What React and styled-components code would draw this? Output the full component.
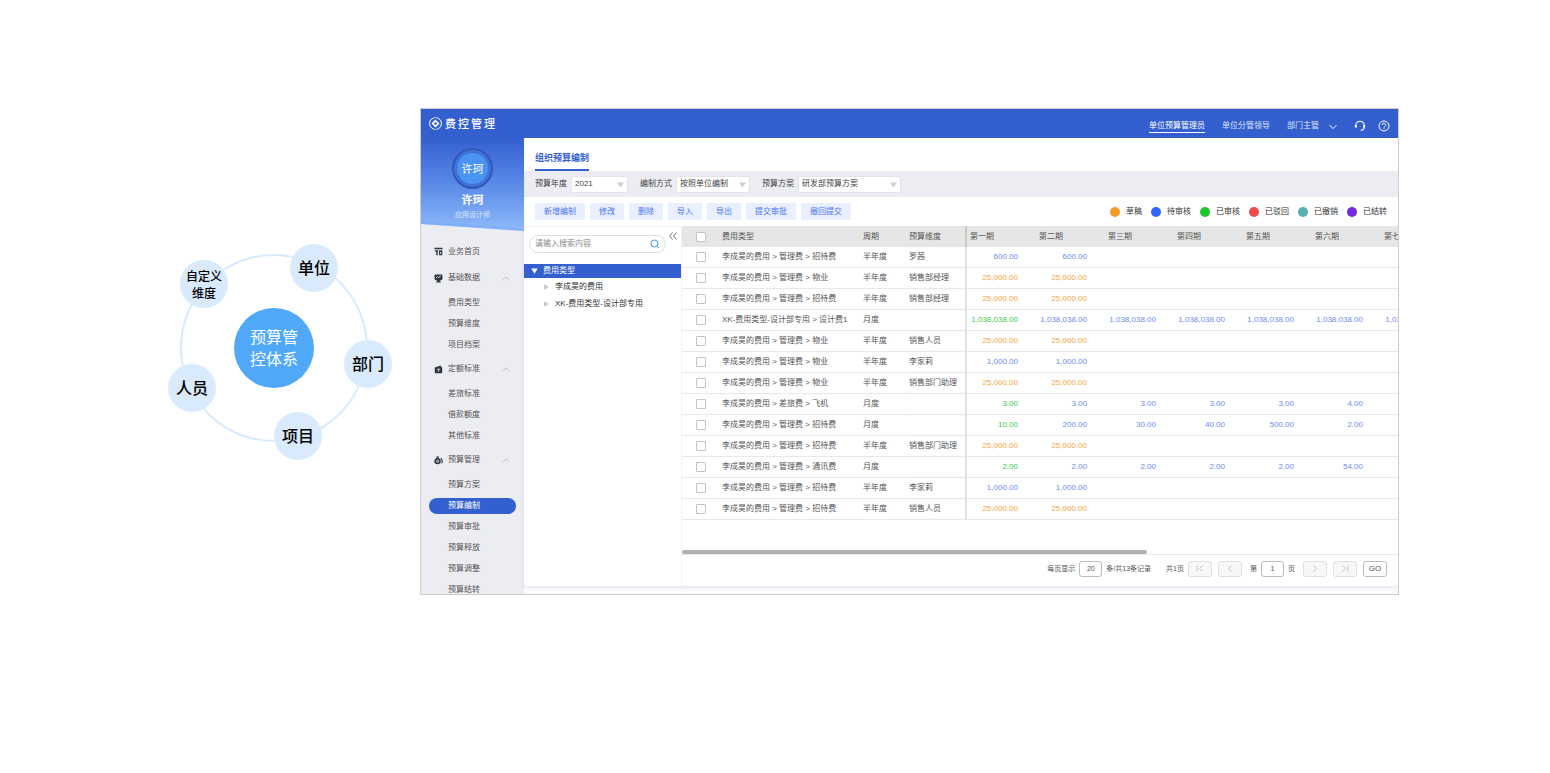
import React from 'react';
import styled, { createGlobalStyle } from 'styled-components';

const legend = [
  { label: '草稿', color: '#f79a2c' },
  { label: '待审核', color: '#3366ff' },
  { label: '已审核', color: '#1fc42f' },
  { label: '已驳回', color: '#f04a4a' },
  { label: '已撤销', color: '#58b0b3' },
  { label: '已结转', color: '#7228dc' },
];

const actions = ['新增编制', '修改', '删除', '导入', '导出', '提交审批', '撤回提交'];

const menu = [
  { title: '基础数据', icon: 'data', items: ['费用类型', '预算维度', '项目档案'] },
  { title: '定额标准', icon: 'quota', items: ['差旅标准', '借款额度', '其他标准'] },
  {
    title: '预算管理',
    icon: 'budget',
    items: ['预算方案', '预算编制', '预算审批', '预算释放', '预算调整', '预算结转'],
  },
];

const periods = ['第一期', '第二期', '第三期', '第四期', '第五期', '第六期', '第七期'];

const draft = '#f7a540';
const pending = '#6b8df8';
const approved = '#3ecb4c';

const entertain = '李成昊的费用 > 管理费 > 招待费';
const property = '李成昊的费用 > 管理费 > 物业';

const rows = [
  { type: entertain, cycle: '半年度', dim: '罗茜', first: pending, rest: pending, values: ['600.00', '600.00'] },
  { type: property, cycle: '半年度', dim: '销售部经理', first: draft, rest: draft, values: ['25,000.00', '25,000.00'] },
  { type: entertain, cycle: '半年度', dim: '销售部经理', first: draft, rest: draft, values: ['25,000.00', '25,000.00'] },
  {
    type: 'XK-费用类型-设计部专用 > 设计费1',
    cycle: '月度',
    dim: '',
    first: approved,
    rest: pending,
    values: Array(7).fill('1,038,038.00'),
  },
  { type: property, cycle: '半年度', dim: '销售人员', first: draft, rest: draft, values: ['25,000.00', '25,000.00'] },
  { type: property, cycle: '半年度', dim: '李家莉', first: pending, rest: pending, values: ['1,000.00', '1,000.00'] },
  { type: property, cycle: '半年度', dim: '销售部门助理', first: draft, rest: draft, values: ['25,000.00', '25,000.00'] },
  {
    type: '李成昊的费用 > 差旅费 > 飞机',
    cycle: '月度',
    dim: '',
    first: approved,
    rest: pending,
    values: ['3.00', '3.00', '3.00', '3.00', '3.00', '4.00'],
  },
  {
    type: entertain,
    cycle: '月度',
    dim: '',
    first: approved,
    rest: pending,
    values: ['10.00', '200.00', '30.00', '40.00', '500.00', '2.00'],
  },
  { type: entertain, cycle: '半年度', dim: '销售部门助理', first: draft, rest: draft, values: ['25,000.00', '25,000.00'] },
  {
    type: '李成昊的费用 > 管理费 > 通讯费',
    cycle: '月度',
    dim: '',
    first: approved,
    rest: pending,
    values: ['2.00', '2.00', '2.00', '2.00', '2.00', '54.00'],
  },
  { type: entertain, cycle: '半年度', dim: '李家莉', first: pending, rest: pending, values: ['1,000.00', '1,000.00'] },
  { type: entertain, cycle: '半年度', dim: '销售人员', first: draft, rest: draft, values: ['25,000.00', '25,000.00'] },
];

export default function App() {
  return (
    <>
      <GlobalStyle />
      <Page>
        <Diagram />
        <Window>
          <TopBar />
          <Body>
            <Sidebar />
            <Main>
              <Panel>
                <Tabs>
                  <Tab>组织预算编制</Tab>
                </Tabs>
                <Filters>
                  <Filter id='year' label='预算年度' value='2021' width='57px' />
                  <Filter id='mode' label='编制方式' value='按照单位编制' width='74px' />
                  <Filter id='plan' label='预算方案' value='研发部预算方案' width='103px' />
                </Filters>
                <Toolbar>
                  <Actions>
                    {actions.map((a) => (
                      <Action key={a} type='button'>
                        {a}
                      </Action>
                    ))}
                  </Actions>
                  <Legend>
                    {legend.map((l) => (
                      <LegendItem key={l.label}>
                        <Dot $color={l.color} />
                        {l.label}
                      </LegendItem>
                    ))}
                  </Legend>
                </Toolbar>
                <Content>
                  <Tree />
                  <Grid>
                    <BudgetTable />
                    <ScrollTrack>
                      <ScrollThumb />
                    </ScrollTrack>
                    <Pagination />
                  </Grid>
                </Content>
              </Panel>
            </Main>
          </Body>
        </Window>
      </Page>
    </>
  );
}

function Diagram() {
  return (
    <Orbit>
      <Ring />
      <Core>
        预算管
        <br />
        控体系
      </Core>
      <Node $x={122} $y={0}>
        单位
      </Node>
      <Node $x={176} $y={96}>
        部门
      </Node>
      <Node $x={106} $y={168}>
        项目
      </Node>
      <Node $x={0} $y={120}>
        人员
      </Node>
      <Node $x={12} $y={16} $small>
        自定义
        <br />
        维度
      </Node>
    </Orbit>
  );
}

function TopBar() {
  return (
    <Header>
      <Brand>
        <svg width='13' height='13' viewBox='0 0 13 13' fill='none' stroke='#fff'>
          <path d='M4 1.1A5.9 5.9 0 0 0 4 11.9M9 1.1A5.9 5.9 0 0 1 9 11.9' />
          <path d='M4 1.1A5.9 5.9 0 0 1 9 1.1M4 11.9A5.9 5.9 0 0 0 9 11.9' opacity='0.7' />
          <path d='M6.5 3.7 9.3 6.5 6.5 9.3 3.7 6.5Z' strokeWidth='1.6' />
        </svg>
        费控管理
      </Brand>
      <Roles>
        <Role href='#admin' $active>
          单位预算管理员
        </Role>
        <Role href='#leader'>单位分管领导</Role>
        <Role href='#manager'>部门主管</Role>
        <IconButton type='button' aria-label='更多'>
          <svg width='8' height='8' viewBox='0 0 8 8' fill='none' stroke='#fff'>
            <path d='M.6 2.2 4 5.6 7.4 2.2' />
          </svg>
        </IconButton>
      </Roles>
      <Tools>
        <IconButton type='button' aria-label='客服'>
          <svg width='12' height='12' viewBox='0 0 12 12' fill='none' stroke='#fff' strokeWidth='1.1'>
            <path d='M1.8 6.6V5.4a4.2 4.2 0 0 1 8.4 0v1.4c0 2-1.2 3.4-3.4 3.6' />
            <path d='M1.9 5.2v2.4M10.1 5.2v2.4' strokeWidth='2' />
          </svg>
        </IconButton>
        <IconButton type='button' aria-label='帮助'>
          <svg width='12' height='12' viewBox='0 0 12 12' fill='none' stroke='#fff'>
            <circle cx='6' cy='6' r='5' />
            <path d='M4.3 5a1.7 1.7 0 1 1 2.5 1.4C6.2 6.8 6 7 6 7.6M6 8.4v1' />
          </svg>
        </IconButton>
      </Tools>
    </Header>
  );
}

function MenuIcon({ name }) {
  return (
    <svg width='9' height='9' viewBox='0 0 9 9' fill='#33363d'>
      {name === 'home' && (
        <path d='M.5.8h8v1.5h-8zM.8 3.3h3.400v1.200H.8zM2.200 4.500h1.500v3.700H2.200zM5 3.300h3.300v4.900H5zM6.200 4.700v2.200h.9V4.700z' fillRule='evenodd' />
      )}
      {name === 'data' && (
        <>
          <path d='M1.8.4h5.4c.8 0 1.300.5 1.300 1.300v2.900c0 .8-.4 1.200-1.100 1.500L5.800 6.800v.7h1v.9H2.200v-.9h1v-.7L1.600 6.100C.9 5.800.5 5.400.5 4.600V1.700C.5.900 1 .4 1.800.4z' />
          <path d='M2.200 3.900l1.300-1.300 1.200 1 2-1.700' fill='none' stroke='#ecedf2' strokeWidth='.9' />
        </>
      )}
      {name === 'quota' && (
        <>
          <path d='M.8 2.600 6.800.6l.5 1.600h.9v5.300c0 .5-.3.8-.8.8H1.600c-.5 0-.8-.3-.8-.8z' />
          <path d='M3.300 4.200h2.600M4.600 4.200v2.400' stroke='#ecedf2' strokeWidth='.9' />
        </>
      )}
      {name === 'budget' && (
        <>
          <path d='M2.200.6h2.800l-.6 1.500c1.500.6 2.400 1.900 2.400 3.500 0 1.800-1 2.700-3.200 2.700S.3 7.400.3 5.600c0-1.600.9-2.900 2.500-3.500z' />
          <path d='M6.100 2.400l1-.3c1.100.9 1.700 2 1.700 3.300 0 1.300-.4 2-1.400 2.400.7-2 .3-3.900-1.300-5.400z' />
          <circle cx='3.600' cy='5.300' r='1.100' fill='none' stroke='#ecedf2' strokeWidth='.9' />
        </>
      )}
    </svg>
  );
}

function Sidebar() {
  return (
    <Aside>
      <Profile>
        <Avatar>
          <AvatarInner>许珂</AvatarInner>
        </Avatar>
        <Name>许珂</Name>
        <Job>应用设计师</Job>
      </Profile>
      <Nav>
        <HomeLink href='#home'>
          <MenuIcon name='home' />
          业务首页
        </HomeLink>
        {menu.map((group) => (
          <section key={group.title}>
            <GroupTitle type='button'>
              <MenuIcon name={group.icon} />
              {group.title}
              <svg width='8' height='5' viewBox='0 0 8 5' fill='none' stroke='#b4b6bb' strokeWidth='.8'>
                <path d='M.8 4 4 1l3.200 3' />
              </svg>
            </GroupTitle>
            {group.items.map((item) => (
              <MenuRow key={item}>
                <MenuLink href='#menu' $active={item === '预算编制'}>
                  {item}
                </MenuLink>
              </MenuRow>
            ))}
          </section>
        ))}
      </Nav>
    </Aside>
  );
}

function Filter({ id, label, value, width }) {
  return (
    <Field>
      <label htmlFor={id}>{label}</label>
      <SelectBox $width={width}>
        <Select id={id} defaultValue={value}>
          <option>{value}</option>
        </Select>
        <Caret width='7' height='6' viewBox='0 0 7 6' fill='#cfcfcf'>
          <path d='M0 .5h7L3.500 5.500z' />
        </Caret>
      </SelectBox>
    </Field>
  );
}

function Tree() {
  return (
    <TreePane>
      <SearchRow>
        <SearchBox>
          <SearchInput type='text' aria-label='搜索' placeholder='请输入搜索内容' />
          <svg width='10' height='10' viewBox='0 0 10 10' fill='none' stroke='#3f97f0'>
            <circle cx='4.500' cy='4.500' r='3.500' />
            <path d='M7 7.200 8.800 9' />
          </svg>
        </SearchBox>
        <Collapse type='button' aria-label='收起'>
          <svg width='8' height='8' viewBox='0 0 8 8' fill='none' stroke='#666' strokeWidth='.9'>
            <path d='M3.600 .5.7 4l2.900 3.500M7.400 .5 4.500 4l2.900 3.500' />
          </svg>
        </Collapse>
      </SearchRow>
      <TreeRoot>
        <svg width='7' height='6' viewBox='0 0 7 6' fill='#fff'>
          <path d='M.3.500h6.400L3.500 5.800z' />
        </svg>
        费用类型
      </TreeRoot>
      {['李成昊的费用', 'XK-费用类型-设计部专用'].map((t) => (
        <TreeLeaf key={t}>
          <svg width='5' height='6' viewBox='0 0 5 6' fill='#c9c9c9'>
            <path d='M0 .3v5.400L5 3z' />
          </svg>
          {t}
        </TreeLeaf>
      ))}
    </TreePane>
  );
}

function BudgetTable() {
  return (
    <TableScroll>
      <Table>
        <colgroup>
          <Col $width={36} />
          <Col $width={141} />
          <Col $width={46} />
          <Col $width={62} />
          {periods.map((p) => (
            <Col key={p} $width={69} />
          ))}
        </colgroup>
        <thead>
          <tr>
            <Th>
              <Check type='checkbox' aria-label='全选' />
            </Th>
            <Th>费用类型</Th>
            <Th>周期</Th>
            <Th $edge>预算维度</Th>
            {periods.map((p) => (
              <Th key={p}>{p}</Th>
            ))}
          </tr>
        </thead>
        <tbody>
          {rows.map((row, i) => (
            <tr key={i}>
              <Td>
                <Check type='checkbox' aria-label={row.type} />
              </Td>
              <Td>{row.type}</Td>
              <Td>{row.cycle}</Td>
              <Td $edge>{row.dim}</Td>
              {periods.map((p, n) => (
                <Amount key={p} $color={n === 0 ? row.first : row.rest}>
                  {row.values[n]}
                </Amount>
              ))}
            </tr>
          ))}
        </tbody>
      </Table>
    </TableScroll>
  );
}

function Pagination() {
  return (
    <Pager>
      <Group>
        <label htmlFor='size'>每页显示</label>
        <PageInput id='size' defaultValue='20' />
        条/共13条记录
      </Group>
      <Group $spaced>
        共1页
        <PageButton type='button' disabled aria-label='首页'>
          <svg width='8' height='7' viewBox='0 0 8 7'>
            <path d='M1 .5v6M6.500 .5l-3 3 3 3' />
          </svg>
        </PageButton>
      </Group>
      <PageButton type='button' disabled aria-label='上一页'>
        <svg width='8' height='7' viewBox='0 0 8 7'>
          <path d='M5.500 .5l-3 3 3 3' />
        </svg>
      </PageButton>
      <Group $inset>
        <label htmlFor='page'>第</label>
        <PageInput id='page' defaultValue='1' />
        页
      </Group>
      <PageButton type='button' disabled aria-label='下一页'>
        <svg width='8' height='7' viewBox='0 0 8 7'>
          <path d='M2.500 .5l3 3-3 3' />
        </svg>
      </PageButton>
      <PageButton type='button' disabled aria-label='末页'>
        <svg width='8' height='7' viewBox='0 0 8 7'>
          <path d='M1.500 .5l3 3-3 3M7 .5v6' />
        </svg>
      </PageButton>
      <PageButton type='button'>GO</PageButton>
    </Pager>
  );
}

const GlobalStyle = createGlobalStyle`
  * {
    box-sizing: border-box;
  }
  body {
    margin: 0;
    background: #fff;
    font-family: 'Liberation Sans', 'Noto Sans CJK SC', sans-serif;
    font-size: 8px;
    line-height: 12px;
    color: #555;
  }
  button, input, select {
    font: inherit;
    color: inherit;
    margin: 0;
  }
  button {
    border: 0;
    padding: 0;
    background: none;
    cursor: pointer;
  }
  a {
    color: inherit;
    text-decoration: none;
  }
  svg {
    display: block;
    flex-shrink: 0;
  }
`;

const Page = styled.main`
  display: grid;
  grid-template-columns: 224px 1fr;
  gap: 28px;
  align-items: center;
  padding: 108px 151px 108px 168px;
`;

/* the circles sit at free positions around the ring */
const Orbit = styled.figure`
  position: relative;
  width: 224px;
  height: 216px;
  margin: 0;
  font-family: 'Noto Sans CJK SC', sans-serif;
`;
const Ring = styled.div`
  position: absolute;
  left: 12px;
  top: 10px;
  width: 188px;
  height: 188px;
  border: 2px solid #d8eafb;
  border-radius: 50%;
`;
const Circle = styled.div`
  position: absolute;
  display: flex;
  align-items: center;
  justify-content: center;
  padding-bottom: 2px;
  text-align: center;
  border-radius: 50%;
`;
const Core = styled(Circle)`
  left: 66px;
  top: 64px;
  width: 80px;
  height: 80px;
  background: #4fa9f8;
  color: #fff;
  font-size: 16px;
  line-height: 22px;
`;
const Node = styled(Circle)`
  left: ${({ $x }) => $x}px;
  top: ${({ $y }) => $y}px;
  width: 48px;
  height: 48px;
  padding-bottom: ${({ $small }) => ($small ? 0 : 2)}px;
  background: #d8eafb;
  color: #000;
  font-weight: 500;
  font-size: ${({ $small }) => ($small ? 12 : 16)}px;
  line-height: ${({ $small }) => ($small ? 17 : 24)}px;
`;

const Window = styled.div`
  min-width: 0;
  border: 1px solid #ccc;
  overflow: hidden;
`;
const Header = styled.header`
  display: flex;
  align-items: center;
  height: 29px;
  padding: 0 8px;
  background: #3460cf;
  color: #fff;
`;
const Brand = styled.div`
  display: flex;
  align-items: center;
  gap: 3px;
  margin-right: auto;
  font-size: 11px;
  font-weight: 500;
  line-height: 16px;
  letter-spacing: 2px;
`;
const Roles = styled.nav`
  display: flex;
  align-items: center;
  gap: 17px;
  padding-top: 6px;

  button {
    margin-left: -7px;
  }
`;
const Role = styled.a`
  border-bottom: 1px solid ${({ $active }) => ($active ? '#fff' : 'transparent')};
  color: ${({ $active }) => ($active ? '#fff' : '#dbe4fa')};
`;
const Tools = styled.div`
  display: flex;
  gap: 12px;
  margin-left: 17px;
  padding-top: 4px;
`;
const IconButton = styled.button`
  display: flex;
`;

const Body = styled.div`
  display: grid;
  grid-template-columns: 103px 1fr;
`;
/* the sidebar never makes the window taller, its menu is cut off instead */
const Aside = styled.aside`
  height: 0;
  min-height: 100%;
  overflow: hidden;
  background: #ecedf2;
`;
const Profile = styled.div`
  display: flex;
  flex-direction: column;
  align-items: center;
  height: 93px;
  padding-top: 10px;
  background: linear-gradient(184deg, transparent 90%, rgba(120, 170, 250, 0.5) 91%),
    linear-gradient(#3460cf, #5585e6 45%, #8fbafa);
  clip-path: polygon(0 0, 100% 0, 100% 100%, 0 86px);
  color: #fff;
`;
const Avatar = styled.div`
  display: grid;
  place-items: center;
  width: 41px;
  height: 41px;
  border: 2px solid #2f58b9;
  border-radius: 50%;
  background: #4070d9;
`;
const AvatarInner = styled.div`
  display: grid;
  place-items: center;
  width: 31px;
  height: 31px;
  border-radius: 50%;
  background: #4a93f3;
  font-size: 11px;
`;
const Name = styled.div`
  margin-top: 3px;
  font-size: 11px;
  font-weight: 700;
  line-height: 16px;
`;
const Job = styled.div`
  font-size: 7px;
  line-height: 14px;
  color: #dde8fd;
`;
const Nav = styled.nav`
  padding: 8px 8px 0;
`;
const HomeLink = styled.a`
  display: flex;
  align-items: center;
  gap: 5px;
  height: 25px;
  padding-left: 5px;
`;
const GroupTitle = styled.button`
  display: flex;
  align-items: center;
  gap: 5px;
  width: 100%;
  height: 28px;
  padding: 0 6px 0 5px;

  svg:last-child {
    margin-left: auto;
  }
`;
const MenuRow = styled.div`
  display: flex;
  align-items: center;
  height: 21px;
`;
const MenuLink = styled.a`
  flex: 1;
  padding: 2px 0 2px 19px;
  border-radius: 8px;
  background: ${({ $active }) => ($active ? '#3460cf' : 'transparent')};
  color: ${({ $active }) => ($active ? '#fff' : 'inherit')};
`;

const Main = styled.section`
  min-width: 0;
  padding-bottom: 8px;
  background: #f9fafc;
`;
const Panel = styled.div`
  background: #fff;
  border-radius: 0 0 4px 4px;
  box-shadow: 0 1px 4px rgba(50, 60, 90, 0.12);
`;
const Tabs = styled.div`
  display: flex;
  height: 33px;
  padding: 0 11px;
`;
const Tab = styled.h1`
  margin: 0;
  padding-top: 7px;
  border-bottom: 2px solid #3460cf;
  font-size: 9px;
  font-weight: 700;
  line-height: 26px;
  color: #3460cf;
`;
const Filters = styled.form`
  display: flex;
  align-items: center;
  gap: 12px;
  height: 26px;
  padding: 0 11px;
  background: #ecedf2;
`;
const Field = styled.div`
  display: flex;
  align-items: center;
  gap: 4px;
  color: #444;
`;
const SelectBox = styled.div`
  position: relative;
  width: ${({ $width }) => $width};
`;
const Select = styled.select`
  appearance: none;
  display: block;
  width: 100%;
  height: 17px;
  padding: 0 3px;
  border: 1px solid #e2e4e9;
  border-radius: 2px;
  background: #fff;
`;
const Caret = styled.svg`
  position: absolute;
  right: 4px;
  top: 6px;
  pointer-events: none;
`;
const Toolbar = styled.div`
  display: flex;
  align-items: center;
  justify-content: space-between;
  height: 29px;
  padding: 0 11px;
`;
const Actions = styled.div`
  display: flex;
  gap: 5px;
`;
const Action = styled.button`
  height: 17px;
  padding: 0 9px;
  border-radius: 1px;
  background: #e9effe;
  color: #4a76f5;
`;
const Legend = styled.div`
  display: flex;
  gap: 9px;
  color: #333;
`;
const LegendItem = styled.span`
  display: flex;
  align-items: center;
  gap: 6px;
`;
const Dot = styled.span`
  width: 10px;
  height: 10px;
  border-radius: 50%;
  background: ${({ $color }) => $color};
`;

const Content = styled.div`
  display: grid;
  grid-template-columns: 158px 1fr;
`;
const TreePane = styled.div`
  border-top: 1px solid #f2f2f4;
  border-right: 1px solid #f2f2f4;
  color: #333;
`;
const SearchRow = styled.div`
  display: flex;
  align-items: flex-start;
  gap: 3px;
  padding: 5px 4px 11px 5px;
`;
const SearchBox = styled.div`
  display: flex;
  align-items: center;
  flex: 1;
  min-width: 0;
  height: 18px;
  margin-top: 3px;
  padding: 0 5px;
  border: 1px solid #dfe0e4;
  border-radius: 9px;
`;
const SearchInput = styled.input`
  flex: 1;
  min-width: 0;
  padding: 0;
  border: 0;
  outline: 0;
  background: none;

  &::placeholder {
    color: #888;
  }
`;
const Collapse = styled.button`
  display: flex;
`;
const TreeRoot = styled.div`
  display: flex;
  align-items: center;
  gap: 5px;
  height: 14px;
  padding-left: 7px;
  background: #3460cf;
  color: #fff;
`;
const TreeLeaf = styled.div`
  display: flex;
  align-items: center;
  gap: 6px;
  height: 17px;
  padding-left: 20px;
`;

const Grid = styled.div`
  min-width: 0;
`;
const TableScroll = styled.div`
  overflow: hidden;
  padding-bottom: 30px;
`;
const Table = styled.table`
  width: 768px;
  table-layout: fixed;
  border-collapse: separate;
  border-spacing: 0;
  white-space: nowrap;
`;
const Col = styled.col`
  width: ${({ $width }) => $width}px;
`;
const cellEdge = ({ $edge }) => ($edge ? 'inset -2px 0 1px rgba(0, 0, 0, 0.12)' : 'none');
const Th = styled.th`
  height: 21px;
  padding: 0 3px 0 4px;
  background: #e6e6e6;
  box-shadow: ${cellEdge};
  font-weight: 400;
  text-align: left;

  &:nth-child(n + 5) {
    padding-left: 3px;
  }
`;
const Td = styled.td`
  height: 21px;
  padding: 0 3px 0 4px;
  border-bottom: 1px solid #e8e8e8;
  box-shadow: ${cellEdge};
`;
const Amount = styled(Td)`
  padding-right: 18px;
  text-align: right;
  color: ${({ $color }) => $color};
`;
const Check = styled.input`
  appearance: none;
  display: block;
  width: 10px;
  height: 10px;
  margin: 0 auto;
  border: 1px solid #c4c4c4;
  border-radius: 1px;
  background: #fff;
`;
const ScrollTrack = styled.div`
  height: 5px;
  border-bottom: 1px solid #e8e8e8;
`;
const ScrollThumb = styled.div`
  width: 65%;
  height: 4px;
  border-radius: 2px;
  background: #b0b0b0;
`;
const Pager = styled.div`
  display: flex;
  align-items: center;
  justify-content: flex-end;
  gap: 6px;
  height: 31px;
  padding: 0 11px 4px 0;
  font-size: 7px;
`;
const Group = styled.div`
  display: flex;
  align-items: center;
  gap: 4px;
  margin: ${({ $inset }) => ($inset ? '0 2px' : '0')};
  margin-left: ${({ $spaced }) => $spaced && '9px'};
`;
const PageInput = styled.input`
  width: 23px;
  height: 16px;
  padding: 0;
  border: 1px solid #bbb;
  border-radius: 3px;
  background: #fff;
  text-align: center;
`;
const PageButton = styled.button`
  display: grid;
  place-items: center;
  width: 24px;
  height: 16px;
  border: 1px solid #bbb;
  border-radius: 3px;
  font-size: 8px;

  &:disabled {
    border-color: #e0e0e0;
    background: #f7f7f7;
  }
  svg {
    fill: none;
    stroke: #c4c4c4;
  }
`;
